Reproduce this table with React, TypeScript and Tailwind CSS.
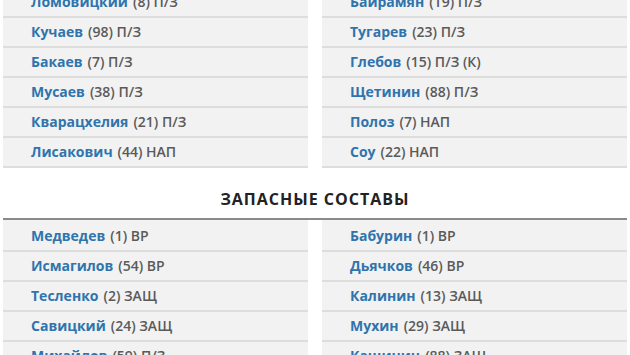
import React from "react";

type P = { name: string; rest: string };

const topLeft: P[] = [
  { name: "Ломовицкий", rest: "(8) П/З" },
  { name: "Кучаев", rest: "(98) П/З" },
  { name: "Бакаев", rest: "(7) П/З" },
  { name: "Мусаев", rest: "(38) П/З" },
  { name: "Кварацхелия", rest: "(21) П/З" },
  { name: "Лисакович", rest: "(44) НАП" },
];
const topRight: P[] = [
  { name: "Байрамян", rest: "(19) П/З" },
  { name: "Тугарев", rest: "(23) П/З" },
  { name: "Глебов", rest: "(15) П/З (К)" },
  { name: "Щетинин", rest: "(88) П/З" },
  { name: "Полоз", rest: "(7) НАП" },
  { name: "Соу", rest: "(22) НАП" },
];
const botLeft: P[] = [
  { name: "Медведев", rest: "(1) ВР" },
  { name: "Исмагилов", rest: "(54) ВР" },
  { name: "Тесленко", rest: "(2) ЗАЩ" },
  { name: "Савицкий", rest: "(24) ЗАЩ" },
  { name: "Михайлов", rest: "(59) П/З" },
];
const botRight: P[] = [
  { name: "Бабурин", rest: "(1) ВР" },
  { name: "Дьячков", rest: "(46) ВР" },
  { name: "Калинин", rest: "(13) ЗАЩ" },
  { name: "Мухин", rest: "(29) ЗАЩ" },
  { name: "Кашинин", rest: "(88) ЗАЩ" },
];

function Col({ items, first }: { items: P[]; first?: boolean }) {
  return (
    <div className="flex flex-col bg-[#f2f2f2]">
      {items.map((p, i) => (
        <div
          key={p.name}
          className={`flex items-center pl-[28px] border-b-2 border-[#dddddd] text-[14px] leading-none ${
            first && i === 0 ? "h-[32px] pt-[1px]" : "h-[30px] pb-[1px]"
          }`}
        >
          <span className="font-bold text-[#2f74ad]">{p.name}</span>
          <span className="ml-[5px] font-semibold text-[#5a5a5a]">{p.rest}</span>
        </div>
      ))}
    </div>
  );
}

export default function App() {
  return (
    <div
      className="w-[630px] h-[355px] overflow-hidden bg-white px-[3px]"
      style={{ fontFamily: '"Open Sans", "Noto Sans", sans-serif' }}
    >
      <div className="grid grid-cols-2 gap-[14px] -mt-[12px]">
        <Col items={topLeft} />
        <Col items={topRight} />
      </div>
      <div className="h-[50px] flex items-center justify-center pt-[12px]">
        <span className="text-[16px] font-bold tracking-[1px] text-[#222222] uppercase">
          Запасные составы
        </span>
      </div>
      <div className="border-t-2 border-[#8a8a8a]" />
      <div className="grid grid-cols-2 gap-[14px]">
        <Col items={botLeft} first />
        <Col items={botRight} first />
      </div>
    </div>
  );
}
